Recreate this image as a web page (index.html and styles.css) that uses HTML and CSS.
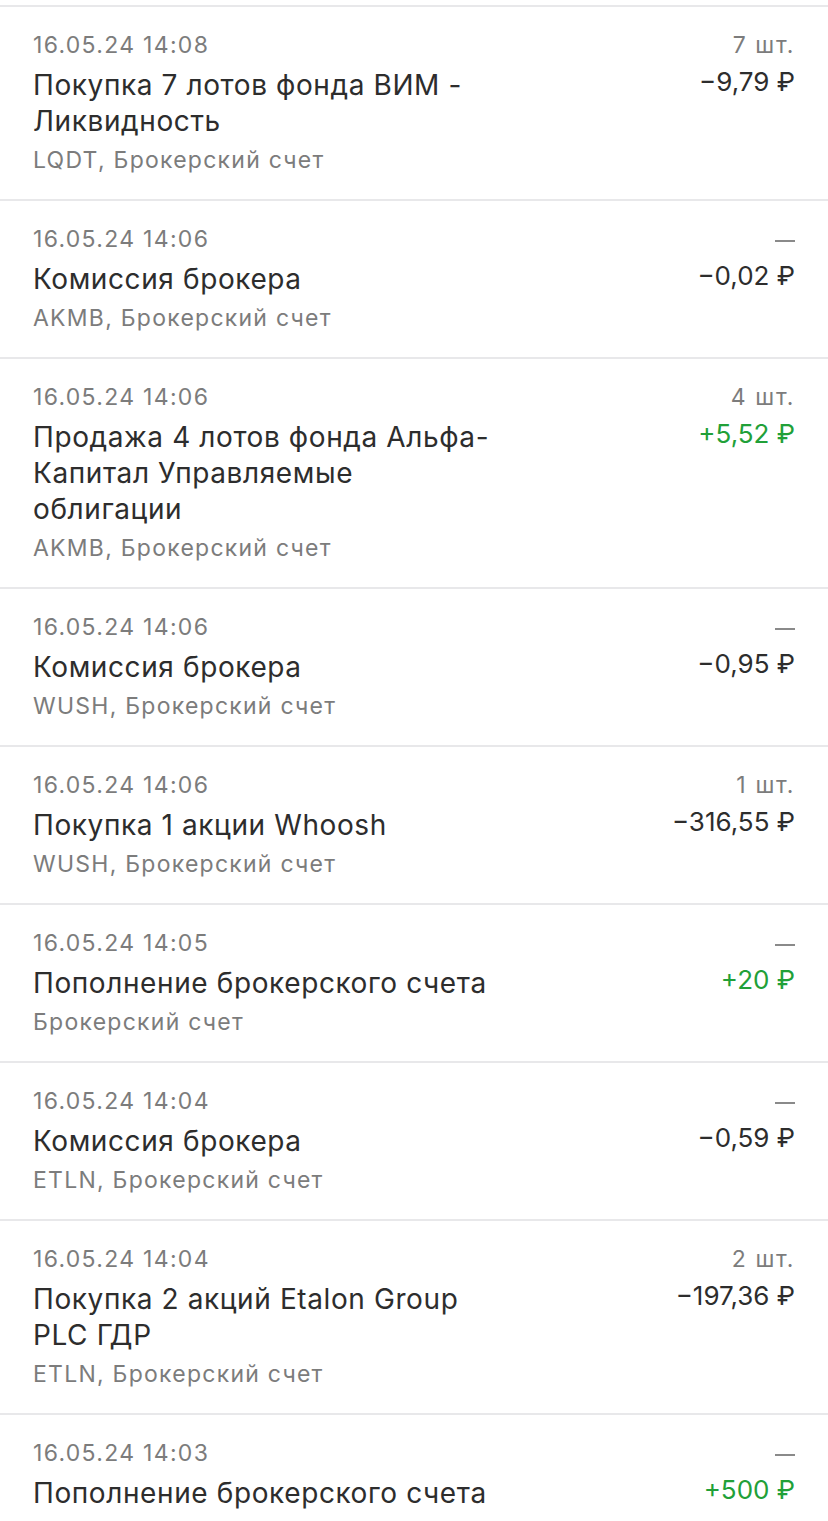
FILE: index.html
```html
<!DOCTYPE html>
<html lang="ru">

<head>
    <meta charset="UTF-8">
    <meta name="viewport" content="width=device-width, initial-scale=1.0">
    <title>Операции</title>
    <link rel="stylesheet" href="styles.css">
</head>

<body>
    <div class="ops">
        <div class="op">
            <div class="op-left">
                <div class="op-date">16.05.24 14:08</div>
                <div class="op-title">Покупка 7 лотов фонда ВИМ - Ликвидность</div>
                <div class="op-sub">LQDT, Брокерский счет</div>
            </div>
            <div class="op-right">
                <div class="op-qty">7 шт.</div>
                <div class="op-sum">−9,79 ₽</div>
            </div>
        </div>

        <div class="op">
            <div class="op-left">
                <div class="op-date">16.05.24 14:06</div>
                <div class="op-title">Комиссия брокера</div>
                <div class="op-sub">AKMB, Брокерский счет</div>
            </div>
            <div class="op-right">
                <div class="op-qty"><span class="dash"></span></div>
                <div class="op-sum">−0,02 ₽</div>
            </div>
        </div>

        <div class="op">
            <div class="op-left">
                <div class="op-date">16.05.24 14:06</div>
                <div class="op-title">Продажа 4 лотов фонда Альфа-Капитал Управляемые облигации</div>
                <div class="op-sub">AKMB, Брокерский счет</div>
            </div>
            <div class="op-right">
                <div class="op-qty">4 шт.</div>
                <div class="op-sum plus">+5,52 ₽</div>
            </div>
        </div>

        <div class="op">
            <div class="op-left">
                <div class="op-date">16.05.24 14:06</div>
                <div class="op-title">Комиссия брокера</div>
                <div class="op-sub">WUSH, Брокерский счет</div>
            </div>
            <div class="op-right">
                <div class="op-qty"><span class="dash"></span></div>
                <div class="op-sum">−0,95 ₽</div>
            </div>
        </div>

        <div class="op">
            <div class="op-left">
                <div class="op-date">16.05.24 14:06</div>
                <div class="op-title">Покупка 1 акции Whoosh</div>
                <div class="op-sub">WUSH, Брокерский счет</div>
            </div>
            <div class="op-right">
                <div class="op-qty">1 шт.</div>
                <div class="op-sum">−316,55 ₽</div>
            </div>
        </div>

        <div class="op">
            <div class="op-left">
                <div class="op-date">16.05.24 14:05</div>
                <div class="op-title">Пополнение брокерского счета</div>
                <div class="op-sub">Брокерский счет</div>
            </div>
            <div class="op-right">
                <div class="op-qty"><span class="dash"></span></div>
                <div class="op-sum plus">+20 ₽</div>
            </div>
        </div>

        <div class="op">
            <div class="op-left">
                <div class="op-date">16.05.24 14:04</div>
                <div class="op-title">Комиссия брокера</div>
                <div class="op-sub">ETLN, Брокерский счет</div>
            </div>
            <div class="op-right">
                <div class="op-qty"><span class="dash"></span></div>
                <div class="op-sum">−0,59 ₽</div>
            </div>
        </div>

        <div class="op">
            <div class="op-left">
                <div class="op-date">16.05.24 14:04</div>
                <div class="op-title">Покупка 2 акций Etalon Group PLC ГДР</div>
                <div class="op-sub">ETLN, Брокерский счет</div>
            </div>
            <div class="op-right">
                <div class="op-qty">2 шт.</div>
                <div class="op-sum">−197,36 ₽</div>
            </div>
        </div>

        <div class="op">
            <div class="op-left">
                <div class="op-date">16.05.24 14:03</div>
                <div class="op-title">Пополнение брокерского счета</div>
                <div class="op-sub">Брокерский счет</div>
            </div>
            <div class="op-right">
                <div class="op-qty"><span class="dash"></span></div>
                <div class="op-sum plus">+500 ₽</div>
            </div>
        </div>
    </div>
</body>

</html>
```

FILE: styles.css
```css
body {
    margin: 0;
    padding: 0;
    background-color: #fff;
    font-family: Inter, "Noto Sans", sans-serif;
    color: #2d2d2d;
}

.ops {
    margin-top: 5px;
    border-top: 2px solid #e8e8ea;
}

.op {
    display: flex;
    justify-content: space-between;
    padding: 23px 33px 23px 33px;
    border-bottom: 2px solid #e8e8ea;
}

.op-left {
    width: 470px;
}

.op-date,
.op-qty {
    font-size: 23px;
    line-height: 30px;
    color: #7c7c7c;
    letter-spacing: 1.3px;
}

.op-title {
    margin-top: 7px;
    font-size: 28px;
    line-height: 36px;
    letter-spacing: 0.6px;
}

.op-sub {
    margin-top: 5px;
    font-size: 23px;
    line-height: 32px;
    color: #7c7c7c;
    letter-spacing: 1.25px;
}

.op-right {
    text-align: right;
}

.op-qty {
    letter-spacing: 1.6px;
}

.op-sum {
    margin-top: 4px;
    font-size: 26px;
    line-height: 36px;
}

.plus {
    color: #21a038;
}

.dash {
    display: inline-block;
    width: 20px;
    height: 2px;
    background-color: #8a8a8a;
    vertical-align: middle;
}
```
